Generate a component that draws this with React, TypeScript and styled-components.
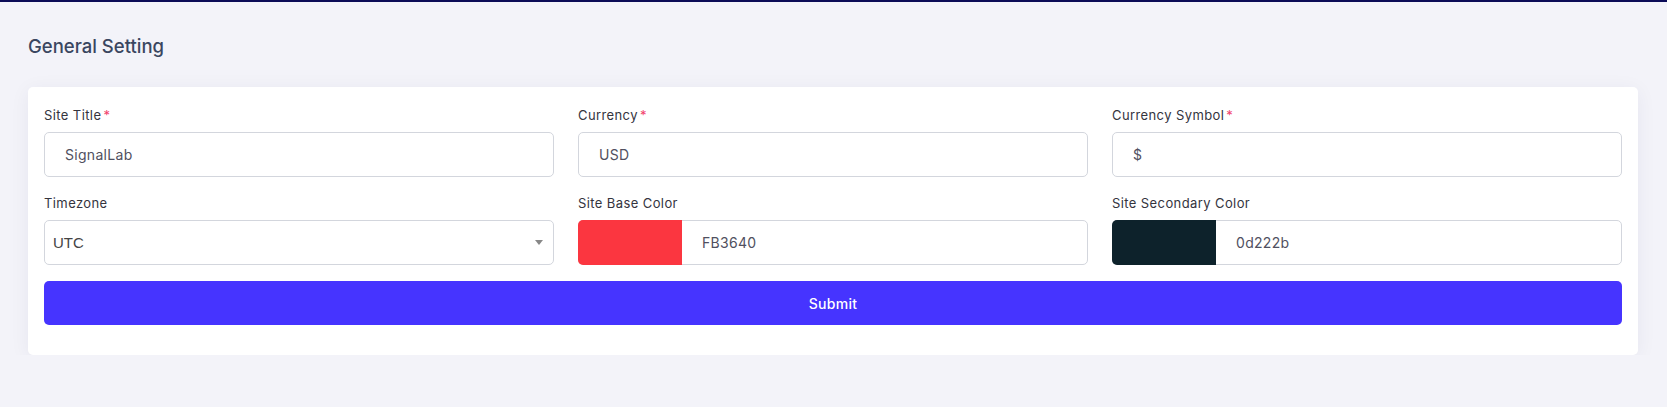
import React from "react";
import styled, { createGlobalStyle } from "styled-components";

const GlobalStyle = createGlobalStyle`
  * { box-sizing: border-box; }
  body {
    margin: 0;
    background: #f3f3f9;
    font-family: "Inter", "Noto Sans", sans-serif;
  }
`

const TopLine = styled.div`
  height: 2px;
  background: #0b0b57;
`

const Page = styled.div`
  padding: 0 29px 0 28px;
`

const PageTitle = styled.h4`
  margin: 0;
  padding: 32px 0 28px 0;
  height: 85px;
  font-size: 18.5px;
  line-height: 24px;
  font-weight: 500;
  color: #3a4660;
`

const Card = styled.div`
  background: #fff;
  border-radius: 5px;
  box-shadow: 0 3px 20px rgba(30, 30, 80, 0.06);
  padding: 18px 16px 30px 16px;
`

const Grid = styled.div`
  display: grid;
  grid-template-columns: repeat(3, 1fr);
  column-gap: 24px;
`

const Group = styled.div`
  margin-bottom: 16px;
`

const Label = styled.label`
  display: block;
  font-size: 13px;
  line-height: 20px;
  letter-spacing: 0.4px;
  color: #34343e;
  margin-bottom: 7px;
`

const Required = styled.span`
  color: #f1416c;
  margin-left: 2px;
`

const TextInput = styled.div`
  height: 45px;
  border: 1px solid #d3d6dd;
  border-radius: 5px;
  padding: 0 20px;
  display: flex;
  align-items: center;
  font-size: 14px;
  letter-spacing: 0.3px;
  color: #505060;
`

const Select = styled.div`
  height: 45px;
  border: 1px solid #d3d6dd;
  border-radius: 5px;
  padding: 0 8px;
  display: flex;
  align-items: center;
  font-family: "Liberation Sans", Arial, sans-serif;
  font-size: 15px;
  color: #444;
`

const Caret = styled.span`
  margin-left: auto;
  margin-right: 2px;
  width: 0;
  height: 0;
  border-left: 4px solid transparent;
  border-right: 4px solid transparent;
  border-top: 5px solid #888;
`

const ColorGroup = styled.div`
  height: 45px;
  border: 1px solid #d3d6dd;
  border-radius: 5px;
  display: flex;
  align-items: stretch;
`

const Swatch = styled.div<{ color: string }>`
  width: 104px;
  margin: -1px 0 -1px -1px;
  border-radius: 5px 0 0 5px;
  background: ${(p) => p.color};
`

const ColorText = styled.div`
  flex: 1;
  display: flex;
  align-items: center;
  padding: 0 20px;
  font-size: 14px;
  letter-spacing: 0.3px;
  color: #505060;
`

const SubmitButton = styled.button`
  display: block;
  width: 100%;
  height: 44px;
  border: none;
  border-radius: 5px;
  background: #4634ff;
  color: #fff;
  font-family: inherit;
  font-size: 14px;
  font-weight: 500;
  letter-spacing: 0.3px;
  cursor: pointer;
`

const Field = ({ label, required, children }: any) => (
  <Group>
    <Label>
      {label}
      {required && <Required>*</Required>}
    </Label>
    {children}
  </Group>
)

const App = () => {
  return (
    <>
      <GlobalStyle />
      <TopLine />
      <Page>
        <PageTitle>General Setting</PageTitle>
        <Card>
          <Grid>
            <Field label="Site Title" required>
              <TextInput>SignalLab</TextInput>
            </Field>
            <Field label="Currency" required>
              <TextInput>USD</TextInput>
            </Field>
            <Field label="Currency Symbol" required>
              <TextInput>$</TextInput>
            </Field>
            <Field label="Timezone">
              <Select>
                UTC
                <Caret />
              </Select>
            </Field>
            <Field label="Site Base Color">
              <ColorGroup>
                <Swatch color="#fb3640" />
                <ColorText>FB3640</ColorText>
              </ColorGroup>
            </Field>
            <Field label="Site Secondary Color">
              <ColorGroup>
                <Swatch color="#0d222b" />
                <ColorText>0d222b</ColorText>
              </ColorGroup>
            </Field>
          </Grid>
          <SubmitButton>Submit</SubmitButton>
        </Card>
      </Page>
    </>
  )
}

export default App
